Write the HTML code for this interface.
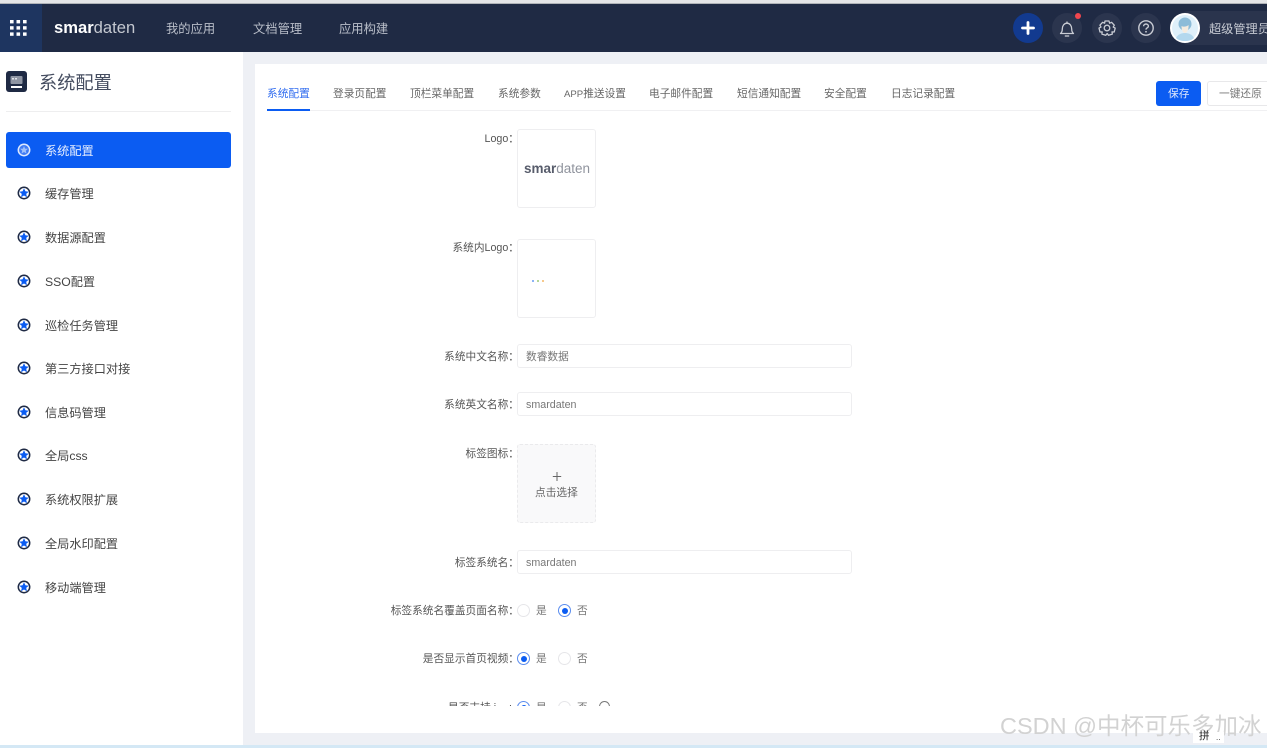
<!DOCTYPE html>
<html lang="zh-CN">
<head>
<meta charset="utf-8">
<title>系统配置</title>
<style>
html,body{margin:0;padding:0;width:1267px;height:748px;overflow:hidden;background:#eef0f5;font-family:"Liberation Sans","Noto Sans CJK SC",sans-serif;}
.a{position:absolute;white-space:nowrap;}
.t{position:absolute;white-space:nowrap;line-height:16px;}
.nav{font-size:12.3px;color:#b9bec9;top:21px;}
.tab{font-size:10.7px;color:#666;top:86px;}
.side{font-size:12.2px;color:#444;left:45px;}
.lab{font-size:10.7px;color:#555;right:748px;}
.inp{position:absolute;left:517px;width:333px;height:22px;border:1px solid #eeeef0;border-radius:3px;background:#fff;}
.val{font-size:10.7px;color:#777;left:526px;}
.box{position:absolute;left:517px;width:77px;height:77px;border:1px solid #eeeef0;border-radius:3px;background:#fff;}
.r{position:absolute;width:11px;height:11px;border:1px solid #e6e6e9;border-radius:50%;background:#fff;}
.r.on{border-color:#5b8def;}
.r.on:after{content:"";position:absolute;left:2.5px;top:2.5px;width:6px;height:6px;border-radius:50%;background:#0b5cf2;}
.ic{position:absolute;left:17px;}
</style>
</head>
<body>
<div class="a" style="left:0;top:0;width:1267px;height:3px;background:#e4e5e7"></div>
<div class="a" style="left:0;top:3px;width:1267px;height:1px;background:#b0b3b8"></div>
<div class="a" style="left:0;top:4px;width:1267px;height:48px;background:#1f2a44"></div>
<div class="a" style="left:0;top:4px;width:42px;height:48px;background:#1e3560"></div>
<svg class="a" style="left:10px;top:20px" width="17" height="16" fill="#fff">
<rect x="0" y="0" width="3.6" height="3.4"/><rect x="6.5" y="0" width="3.6" height="3.4"/><rect x="13" y="0" width="3.6" height="3.4"/>
<rect x="0" y="6.2" width="3.6" height="3.4"/><rect x="6.5" y="6.2" width="3.6" height="3.4"/><rect x="13" y="6.2" width="3.6" height="3.4"/>
<rect x="0" y="12.4" width="3.6" height="3.4"/><rect x="6.5" y="12.4" width="3.6" height="3.4"/><rect x="13" y="12.4" width="3.6" height="3.4"/>
</svg>
<div class="t" style="left:54px;top:20px;font-size:16.6px;color:#fff"><b>smar</b><span style="color:#c4c8d0">daten</span></div>
<div class="t nav" style="left:166px">我的应用</div>
<div class="t nav" style="left:253px">文档管理</div>
<div class="t nav" style="left:339px">应用构建</div>

<svg class="a" style="left:1013px;top:13px" width="30" height="30">
<circle cx="15" cy="15" r="15" fill="#123a8f"/>
<path d="M15 9.500v11M9.500 15h11" stroke="#fff" stroke-width="2.800" stroke-linecap="round"/>
</svg>
<svg class="a" style="left:1052px;top:13px" width="30" height="30">
<circle cx="15" cy="15" r="15" fill="#2b354e"/>
<path d="M8.500 20.500c1.300-1 1.800-2 1.800-4.500c0-3.200 1.900-5.800 4.700-5.800s4.700 2.600 4.700 5.800c0 2.500.5 3.500 1.800 4.500z" fill="none" stroke="#c9ccd4" stroke-width="1.300" stroke-linejoin="round"/>
<path d="M12.800 23h4.400" stroke="#c9ccd4" stroke-width="1.300"/>
<path d="M15 8.500v1.700" stroke="#c9ccd4" stroke-width="1.300"/>
</svg>
<div class="a" style="left:1075px;top:13px;width:6px;height:6px;border-radius:50%;background:#f0464e"></div>
<svg class="a" style="left:1092px;top:13px" width="30" height="30">
<circle cx="15" cy="15" r="15" fill="#2b354e"/>
<path d="M13 8h4l.6 2.200 2-.9 2.700 2.900-1.100 1.900 2 1-1 3.900-2.200-.1.300 2.200-3.800 1.200-1.300-1.800-1.500 1.800-3.800-1.200.3-2.200-2.200.1-1-3.900 2-1-1.100-1.900 2.700-2.900 2 .9z" fill="none" stroke="#c9ccd4" stroke-width="1.300" stroke-linejoin="round"/>
<circle cx="15" cy="15" r="2.800" fill="none" stroke="#c9ccd4" stroke-width="1.300"/>
</svg>
<svg class="a" style="left:1131px;top:13px" width="30" height="30">
<circle cx="15" cy="15" r="15" fill="#2b354e"/>
<circle cx="15" cy="15" r="7.200" fill="none" stroke="#c9ccd4" stroke-width="1.400"/>
<path d="M12.600 13.300c0-1.400 1.100-2.300 2.400-2.300s2.400.9 2.400 2.100c0 1.800-2.400 1.700-2.400 3.500" fill="none" stroke="#c9ccd4" stroke-width="1.400"/>
<circle cx="15" cy="18.800" r=".9" fill="#c9ccd4"/>
</svg>
<div class="a" style="left:1180px;top:11px;width:87px;height:34px;background:#2a344d;border-radius:8px 0 0 8px"></div>
<svg class="a" style="left:1170px;top:13px" width="30" height="30">
<circle cx="15" cy="15" r="15" fill="#fff"/>
<circle cx="15" cy="15" r="13" fill="#dff0fa"/>
<ellipse cx="15" cy="11" rx="6.500" ry="6.500" fill="#8dbcd8"/>
<path d="M11.500 13c1.500 1 5 1 7-1 .5 4-1.500 8-3.500 8s-3.500-3-3.500-7z" fill="#f6ecdf"/>
<path d="M6 25c2-4 6-5 9-5s7 1 9 5c-2 2-5 3-9 3s-7-1-9-3z" fill="#b3d8ee"/>
</svg>
<div class="t" style="left:1209px;top:21px;font-size:12.2px;color:#c6cad2">超级管理员</div>

<!-- sidebar -->
<div class="a" style="left:0;top:52px;width:243px;height:693px;background:#fff"></div>
<svg class="a" style="left:6px;top:71px" width="21" height="22">
<rect width="21" height="21" rx="3" fill="#1f2a44"/>
<rect x="4.500" y="5" width="12" height="8" rx="1" fill="#8f95a3"/>
<rect x="5" y="15" width="11" height="2" fill="#fff"/>
<rect x="6" y="7" width="2" height="1.500" fill="#e3e5ea"/><rect x="9" y="7" width="2" height="1.500" fill="#e3e5ea"/>
</svg>
<div class="t" style="left:39px;top:73px;font-size:18.2px;line-height:20px;color:#454d60">系统配置</div>
<div class="a" style="left:6px;top:111px;width:225px;height:1px;background:#eeeeef"></div>
<div class="a" style="left:6px;top:132px;width:225px;height:36px;background:#0b5cf2;border-radius:3px"></div>

<svg width="0" height="0" style="position:absolute"><defs>
<g id="st"><circle cx="7" cy="7" r="5.700" fill="#fff" stroke="#1f2a44" stroke-width="1.500"/><path d="M7 2.300l1.400 3 3.300.4-2.500 2.200.8 3.300-3-1.700-3 1.700.8-3.300-2.500-2.200 3.300-.4z" fill="#0b5cf2"/></g>
<g id="st2"><circle cx="7" cy="7" r="5.700" fill="#3f7bf5" stroke="#dfe9fe" stroke-width="1.500"/><path d="M7 3l1.100 2.600 2.800.2-2.100 1.900.7 2.800-2.500-1.500-2.500 1.500.7-2.800-2.100-1.900 2.800-.2z" fill="#9fc0fa"/></g>
</defs></svg>
<svg class="ic" style="top:143px" width="14" height="14"><use href="#st2"/></svg>
<svg class="ic" style="top:186px" width="14" height="14"><use href="#st"/></svg>
<svg class="ic" style="top:230px" width="14" height="14"><use href="#st"/></svg>
<svg class="ic" style="top:274px" width="14" height="14"><use href="#st"/></svg>
<svg class="ic" style="top:318px" width="14" height="14"><use href="#st"/></svg>
<svg class="ic" style="top:361px" width="14" height="14"><use href="#st"/></svg>
<svg class="ic" style="top:405px" width="14" height="14"><use href="#st"/></svg>
<svg class="ic" style="top:448px" width="14" height="14"><use href="#st"/></svg>
<svg class="ic" style="top:492px" width="14" height="14"><use href="#st"/></svg>
<svg class="ic" style="top:536px" width="14" height="14"><use href="#st"/></svg>
<svg class="ic" style="top:580px" width="14" height="14"><use href="#st"/></svg>
<div class="t side" style="top:143px;color:#e8efff">系统配置</div>
<div class="t side" style="top:186px">缓存管理</div>
<div class="t side" style="top:230px">数据源配置</div>
<div class="t side" style="top:274px">SSO配置</div>
<div class="t side" style="top:318px">巡检任务管理</div>
<div class="t side" style="top:361px">第三方接口对接</div>
<div class="t side" style="top:405px">信息码管理</div>
<div class="t side" style="top:448px">全局css</div>
<div class="t side" style="top:492px">系统权限扩展</div>
<div class="t side" style="top:536px">全局水印配置</div>
<div class="t side" style="top:580px">移动端管理</div>

<!-- content -->
<div class="a" style="left:255px;top:64px;width:1012px;height:669px;background:#fff"></div>
<div class="a" style="left:267px;top:110px;width:1000px;height:1px;background:#f0f0f2"></div>
<div class="a" style="left:267px;top:109px;width:43px;height:2px;background:#0b5cf2"></div>
<div class="t tab" style="left:267px;color:#2f6bef">系统配置</div>
<div class="t tab" style="left:333px">登录页配置</div>
<div class="t tab" style="left:410px">顶栏菜单配置</div>
<div class="t tab" style="left:498px">系统参数</div>
<div class="t tab" style="left:564px"><span style="font-size:9.600px">APP</span>推送设置</div>
<div class="t tab" style="left:649px">电子邮件配置</div>
<div class="t tab" style="left:737px">短信通知配置</div>
<div class="t tab" style="left:824px">安全配置</div>
<div class="t tab" style="left:891px">日志记录配置</div>

<div class="a" style="left:1156px;top:81px;width:45px;height:25px;background:#0b5cf2;border-radius:3px"></div>
<div class="t" style="left:1168px;top:86px;font-size:10.7px;color:#dfe8fd">保存</div>
<div class="a" style="left:1207px;top:81px;width:70px;height:23px;border:1px solid #e8e8ea;border-radius:3px;background:#fff"></div>
<div class="t" style="left:1219px;top:86px;font-size:10.7px;color:#777">一键还原</div>

<div class="t lab" style="top:131px">Logo：</div>
<div class="box" style="top:129px"></div>
<div class="t" style="left:524px;top:161px;font-size:13.500px;color:#6a6f7c"><b style="color:#575c6b">smar</b><span style="color:#8f939d">daten</span></div>
<div class="t lab" style="top:240px">系统内Logo：</div>
<div class="box" style="top:239px"></div>
<div class="a" style="left:532px;top:280px;width:2px;height:2px;background:#8db3f5"></div>
<div class="a" style="left:537px;top:280px;width:2px;height:2px;background:#b4d69a"></div>
<div class="a" style="left:542px;top:280px;width:2px;height:2px;background:#f7c98c"></div>

<div class="t lab" style="top:349px">系统中文名称：</div>
<div class="inp" style="top:344px"></div>
<div class="t val" style="top:349px">数睿数据</div>
<div class="t lab" style="top:397px">系统英文名称：</div>
<div class="inp" style="top:392px"></div>
<div class="t val" style="top:397px">smardaten</div>
<div class="t lab" style="top:446px">标签图标：</div>
<div class="box" style="top:444px;background:#f9f9fa;border:1px dashed #eaeaec"></div>
<svg class="a" style="left:552px;top:471px" width="10" height="11"><path d="M5 1v9M.8 5.500h8.400" stroke="#666" stroke-width="1" fill="none"/></svg>
<div class="t" style="left:535px;top:485px;font-size:10.7px;color:#666">点击选择</div>
<div class="t lab" style="top:555px">标签系统名：</div>
<div class="inp" style="top:550px"></div>
<div class="t val" style="top:555px">smardaten</div>

<div class="t lab" style="top:603px">标签系统名覆盖页面名称：</div>
<div class="r" style="left:517px;top:604px"></div>
<div class="t val" style="left:536px;top:603px">是</div>
<div class="r on" style="left:558px;top:604px"></div>
<div class="t val" style="left:577px;top:603px">否</div>

<div class="t lab" style="top:651px">是否显示首页视频：</div>
<div class="r on" style="left:517px;top:652px"></div>
<div class="t val" style="left:536px;top:651px">是</div>
<div class="r" style="left:558px;top:652px"></div>
<div class="t val" style="left:577px;top:651px">否</div>

<div class="a" style="left:380px;top:695px;width:300px;height:11px;overflow:hidden">
<div class="t lab" style="right:auto;left:68px;top:5px">是否支持 i</div>
<div class="t lab" style="right:auto;left:129px;top:5px">:</div>
<div class="r on" style="left:137px;top:6px"></div>
<div class="t val" style="left:156px;top:5px">是</div>
<div class="r" style="left:178px;top:6px"></div>
<div class="t val" style="left:197px;top:5px">否</div>
<div class="r" style="left:219px;top:6px;width:9px;height:9px;border-color:#777"></div>
</div>

<div class="a" style="left:0;top:745px;width:1267px;height:3px;background:#d4e8f5"></div>
<div class="t" style="left:1000px;top:712px;font-size:23.500px;line-height:28px;color:#d2d2d2">CSDN @中杯可乐多加冰</div>
<div class="a" style="left:1193px;top:732px;width:31px;height:11px;background:#fff"></div>
<div class="t" style="left:1199px;top:730px;font-size:10.500px;line-height:13px;color:#222">拼</div>
<div class="t" style="left:1216px;top:733px;font-size:8px;line-height:10px;color:#333">..</div>
</body>
</html>
